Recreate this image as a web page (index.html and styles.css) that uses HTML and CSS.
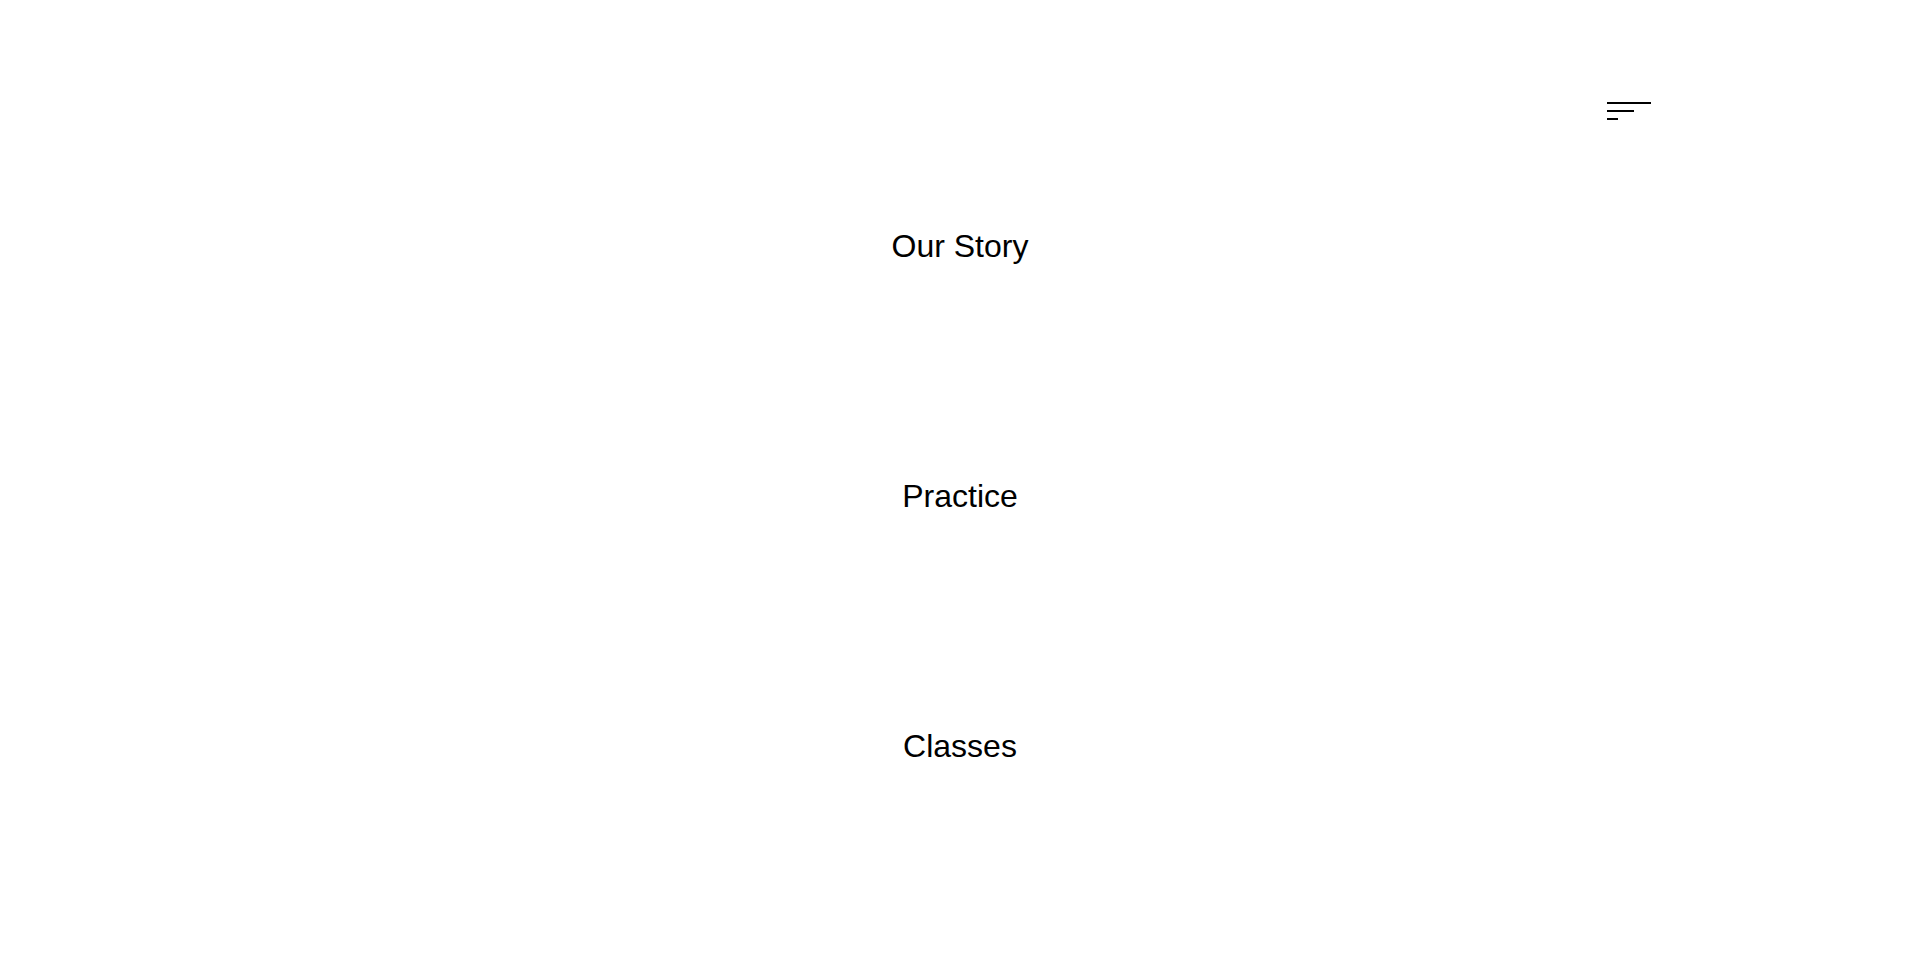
FILE: index.html
```html
<!DOCTYPE html>
<html lang="en">
<head>
<meta charset="utf-8">
<title>Menu</title>
<link rel="stylesheet" href="styles.css">
</head>
<body>
<div class="page">
  <header class="header">
    <button class="burger" aria-label="Menu">
      <span class="bar bar-long"></span>
      <span class="bar bar-mid"></span>
      <span class="bar bar-short"></span>
    </button>
  </header>
  <nav class="menu">
    <a class="menu-item" href="#">Our Story</a>
    <a class="menu-item" href="#">Practice</a>
    <a class="menu-item" href="#">Classes</a>
  </nav>
</div>
</body>
</html>
```
FILE: styles.css
```css
html, body {
  margin: 0;
  padding: 0;
  background: #fff;
}
body {
  font-family: "Liberation Sans", Arial, sans-serif;
  color: #000;
  overflow: hidden;
}
.page {
  width: 1380px;
  margin: 0 auto;
}
.header {
  height: 121px;
  display: flex;
  justify-content: flex-end;
  align-items: flex-start;
}
.burger {
  margin-top: 102px;
  margin-right: -1px;
  padding: 0;
  border: 0;
  background: none;
  width: 44px;
  display: flex;
  flex-direction: column;
  gap: 6px;
  cursor: pointer;
}
.bar {
  display: block;
  height: 2px;
  background: #000;
}
.bar-long { width: 44px; }
.bar-mid { width: 27px; }
.bar-short { width: 11px; }
.menu {
  display: flex;
  flex-direction: column;
  align-items: center;
}
.menu-item {
  height: 250px;
  display: flex;
  align-items: center;
  font-size: 32px;
  color: #000;
  text-decoration: none;
}
```
